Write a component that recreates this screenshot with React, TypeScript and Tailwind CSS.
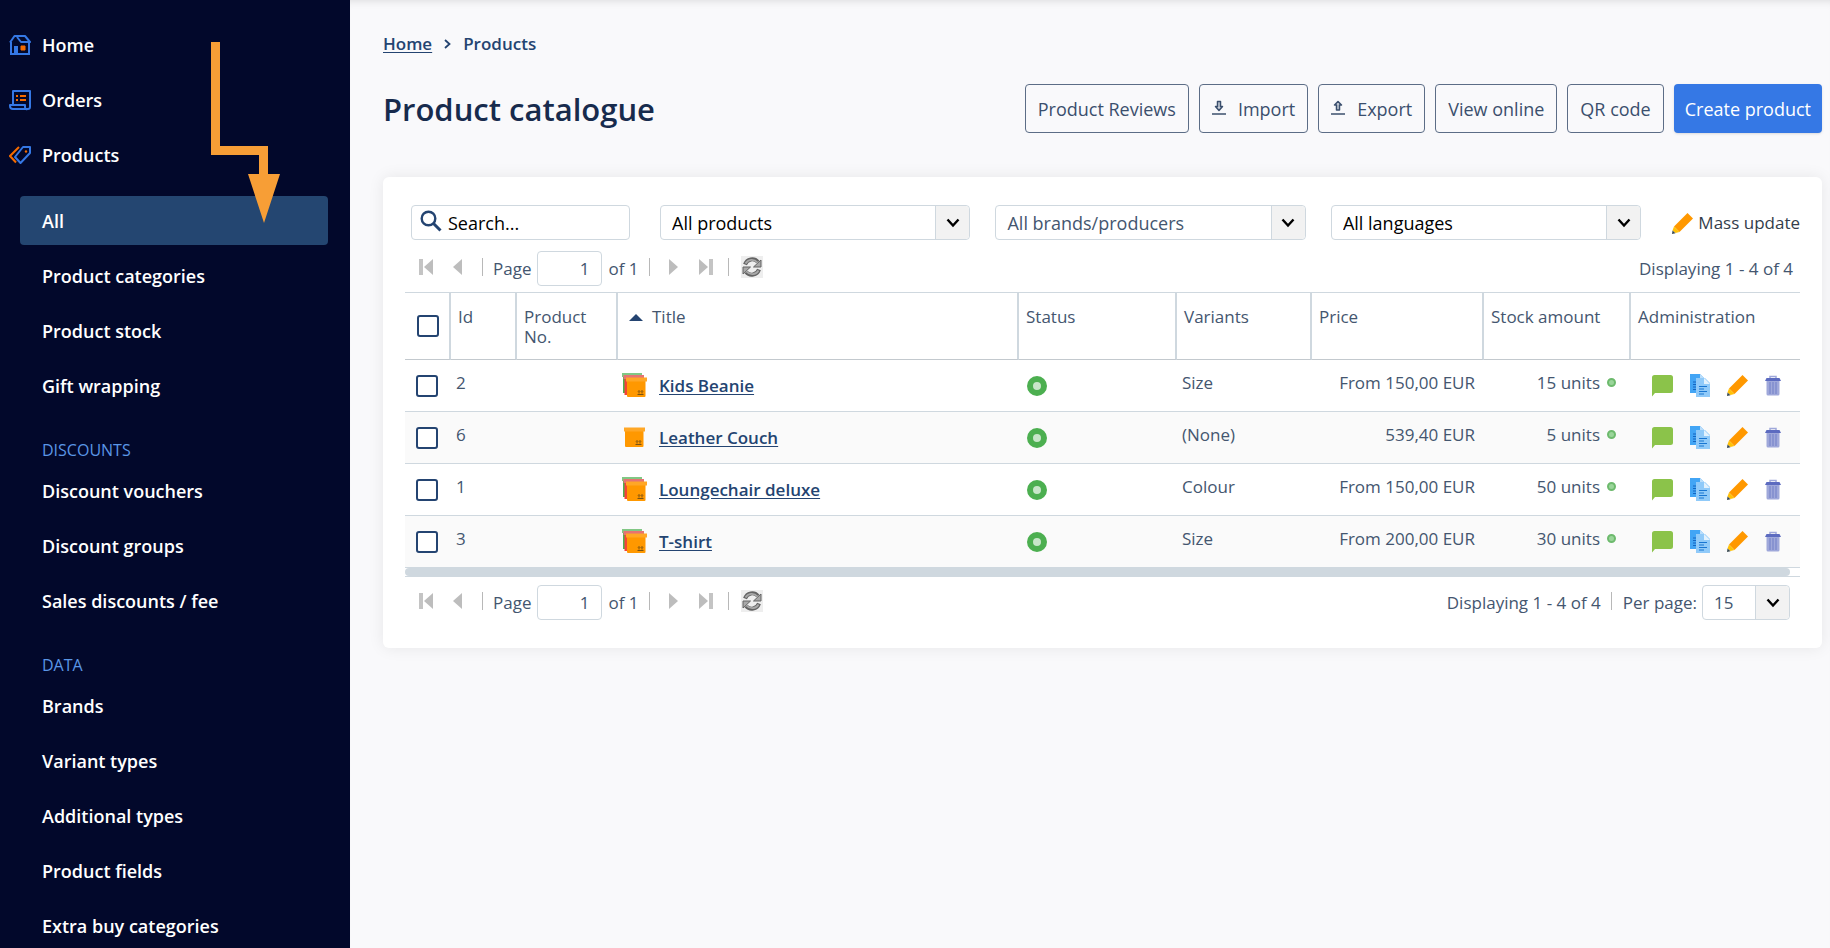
import type { ReactNode } from 'react';
import clsx from 'clsx';

type MenuItem = { label: string; active?: boolean };

const productMenu: MenuItem[] = [
  { label: 'All', active: true },
  { label: 'Product categories' },
  { label: 'Product stock' },
  { label: 'Gift wrapping' },
];

const discountMenu: MenuItem[] = [
  { label: 'Discount vouchers' },
  { label: 'Discount groups' },
  { label: 'Sales discounts / fee' },
];

const dataMenu: MenuItem[] = [
  { label: 'Brands' },
  { label: 'Variant types' },
  { label: 'Additional types' },
  { label: 'Product fields' },
  { label: 'Extra buy categories' },
];

const products = [
  { id: 2, title: 'Kids Beanie', variants: 'Size', price: 'From 150,00 EUR', stock: '15 units', stacked: true },
  { id: 6, title: 'Leather Couch', variants: '(None)', price: '539,40 EUR', stock: '5 units', stacked: false },
  { id: 1, title: 'Loungechair deluxe', variants: 'Colour', price: 'From 150,00 EUR', stock: '50 units', stacked: true },
  { id: 3, title: 'T-shirt', variants: 'Size', price: 'From 200,00 EUR', stock: '30 units', stacked: true },
];

/* ---------- icons ---------- */

function HomeIcon() {
  return (
    <svg width="22" height="20" viewBox="0 0 22 20" fill="none" stroke="#3578e5" strokeWidth="2">
      <path d="M2 7v12h18V7" />
      <path d="M1 7.500L5.500 1H16l5 6h-9L8 2" strokeLinejoin="round" />
      <path d="M5 11h4v8H5z" fill="#3578e5" stroke="none" />
      <path d="M12 11h4v4h-4z" fill="#f56b00" stroke="#f56b00" strokeWidth="1" />
    </svg>
  );
}

function OrdersIcon() {
  return (
    <svg width="23" height="22" viewBox="0 0 23 22" fill="none" stroke="#3578e5" strokeWidth="2">
      <path d="M4 15V2h17v16a2 2 0 0 1-2 2H4a3 3 0 0 1-3-3v-1h15v2a2 2 0 0 0 3 2" strokeLinejoin="round" />
      <path d="M7 7h2M7 11h2M11 7h6M11 11h6" stroke="#f56b00" />
    </svg>
  );
}

function ProductsIcon() {
  return (
    <svg width="23" height="18" viewBox="0 0 23 18" fill="none" stroke="#3578e5" strokeWidth="2">
      <path d="M10 1L1 10l6 6.500" stroke="#f56b00" />
      <path d="M14 1h7v6l-9.500 10L6 11z" strokeLinejoin="round" />
      <circle cx="17" cy="5.500" r="1.200" fill="#f56b00" stroke="none" />
    </svg>
  );
}

function TransferIcon({ up = false }: { up?: boolean }) {
  return (
    <svg width="14" height="15" viewBox="0 0 14 15" fill="#c9cfd9" stroke="#3b4f6d" strokeWidth="1.500" className="mb-[3px]">
      {up ? (
        <path d="M5.500 10V5H3.500L7 1.500 10.500 5h-2v5z" strokeLinejoin="round" />
      ) : (
        <path d="M5.500 1.500v5H3.500L7 10.500l3.500-4h-2v-5z" strokeLinejoin="round" />
      )}
      <path d="M0 14h14" />
    </svg>
  );
}

function SearchIcon() {
  return (
    <svg width="22" height="22" viewBox="0 0 22 22" fill="none" stroke="#244471" strokeWidth="2.400" className="mb-[3px] shrink-0">
      <circle cx="8.500" cy="8.500" r="6.800" />
      <path d="M13.500 13.500l7 7" strokeWidth="3" />
    </svg>
  );
}

function PencilIcon() {
  return (
    <svg width="23" height="23" viewBox="0 0 23 23">
      <path d="M16.500 1L22 6.500 8.500 20 3 14.500z" fill="#ff9800" />
      <path d="M3 14.500L8.500 20 4.500 21 1.500 18.500z" fill="#ffc107" />
      <path d="M1.500 18.500l3 2.700L1 22z" fill="#37474f" />
    </svg>
  );
}

function CommentIcon() {
  return (
    <svg width="23" height="23" viewBox="0 0 23 23">
      <path d="M3.500 1h16A2.500 2.500 0 0 1 22 3.500v13a2.500 2.500 0 0 1-2.500 2.500H4l-3 3.500v-19A2.500 2.500 0 0 1 3.500 1z" fill="#8bc34a" />
    </svg>
  );
}

function CopyIcon() {
  return (
    <svg width="20" height="23" viewBox="0 0 20 23">
      <path d="M0 0h10l4 4v15H0z" fill="#42a5f5" />
      <path d="M10 0l4 4h-4z" fill="#bbdefb" />
      <path d="M3 8h4M3 10.500h4M3 13h4M3 15.500h4" stroke="#1565c0" strokeWidth="1.200" />
      <path d="M6 4h9l5 5v14H6z" fill="#90caf9" />
      <path d="M14 4l6 6h-6z" fill="#e3f2fd" />
      <path d="M9 12.500h8M9 15h5M9 17.500h8M9 20h5" stroke="#1976d2" strokeWidth="1.200" />
    </svg>
  );
}

function TrashIcon() {
  return (
    <svg width="16" height="21" viewBox="0 0 16 21">
      <path d="M5 3V1.500h6V3" fill="none" stroke="#9fa8da" strokeWidth="1.500" />
      <path d="M1.500 6h13v13a1.500 1.500 0 0 1-1.500 1.500H3A1.500 1.500 0 0 1 1.500 19z" fill="#9fa8da" />
      <path d="M5 7v12M8 7v12M11 7v12" stroke="#7986cb" strokeWidth="1.200" />
      <path d="M1.500 3h13L16 6H0z" fill="#5c6bc0" />
    </svg>
  );
}

function BoxIcon({ stacked }: { stacked: boolean }) {
  return (
    <svg width="25" height="25" viewBox="0 0 25 25">
      {stacked && (
        <>
          <path d="M1 3h6v17H1z" fill="#4caf50" />
          <path d="M0 0h20v4H0z" fill="#81c784" />
          <path d="M2.500 5h6v17h-6z" fill="#f44336" />
          <path d="M1.500 2h20.500v4H1.500z" fill="#e57373" />
        </>
      )}
      <g transform={stacked ? undefined : 'translate(-2 -2)'}>
        <path d="M5 8h18.500v15a1 1 0 0 1-1 1H6a1 1 0 0 1-1-1z" fill="#ff9800" />
        <path d="M4 4.500h21v4H4z" fill="#ffa726" />
        <path d="M17 20.500V18M20 20.500V18M15.500 21.500h6M16 18.500l1-1 1 1M19 18.500l1-1 1 1" stroke="#6b4a12" strokeWidth="0.900" fill="none" />
      </g>
    </svg>
  );
}

function RefreshIcon() {
  return (
    <svg width="22" height="22" viewBox="0 0 22 22" fill="none">
      <path d="M4 8.500C6 3 13 1.500 17 6M18 13.500C16 19 9 20.500 5 16" stroke="#646464" strokeWidth="4" />
      <path d="M20 4v7h-7.500zM2 18v-7h7.500z" fill="#a8a8a8" stroke="#646464" strokeLinejoin="round" />
      <path d="M4.500 7.500C7 3 13 2.500 16.500 6.500M17.500 14.500C15 19 9 19.500 5.500 15.500" stroke="#a8a8a8" strokeWidth="1.800" />
    </svg>
  );
}

function StepIcon({ edge = false, back = false }: { edge?: boolean; back?: boolean }) {
  return (
    <svg width={edge ? 14 : 9} height="18" viewBox={edge ? '0 0 14 18' : '0 0 9 18'} className={clsx(back && '-scale-x-100')}>
      <path d="M0 1l9 8-9 8z" fill="#bdbdbd" />
      {edge && <path d="M10 1h4v16h-4z" fill="#c4c4c4" />}
    </svg>
  );
}

/* ---------- shared controls ---------- */

function SelectBox({ label, value, muted, className }: { label: string; value: string; muted?: boolean; className?: string }) {
  return (
    <div className={clsx('relative h-[35px]', className)}>
      <select
        aria-label={label}
        className={clsx(
          'h-full w-full appearance-none rounded border border-[#cfd8df] bg-white pl-[11px] pr-9',
          muted ? 'text-[#44566f]' : 'text-black',
        )}
      >
        <option>{value}</option>
      </select>
      <span className="pointer-events-none absolute inset-y-px right-px flex w-[34px] items-center justify-center rounded-r border-l border-[#cfd8df] bg-[#f2f2f2]">
        <svg width="14" height="10" viewBox="0 0 14 10" fill="none" stroke="#000" strokeWidth="2.400">
          <path d="M1.500 1.500L7 7.500l5.500-6" />
        </svg>
      </span>
    </div>
  );
}

function CheckBox({ label }: { label: string }) {
  return (
    <input
      type="checkbox"
      aria-label={label}
      className="block h-[22px] w-[22px] appearance-none rounded-[3px] border-2 border-[#244471] bg-white checked:bg-[#244471]"
    />
  );
}

function Separator() {
  return <span className="mb-1 h-[18px] w-px bg-[#b8b8b8]" />;
}

function Pager({ children }: { children: ReactNode }) {
  return (
    <div className="flex h-[35px] items-center pl-2">
      <button aria-label="First page" className="mb-1 ml-[6px]"><StepIcon edge back /></button>
      <button aria-label="Previous page" className="mb-1 ml-5 mr-5"><StepIcon back /></button>
      <Separator />
      <label className="ml-[10px] flex items-center gap-[6px]">
        <span className="pt-px">Page</span>
        <input
          type="text"
          defaultValue="1"
          className="h-[35px] w-[65px] rounded border border-[#cfd8df] bg-white pr-3 text-right"
        />
      </label>
      <span className="mr-[10px] ml-[6px] pt-px">of 1</span>
      <Separator />
      <button aria-label="Next page" className="mb-1 ml-[19px]"><StepIcon /></button>
      <button aria-label="Last page" className="mb-1 ml-[21px] mr-[15px]"><StepIcon edge /></button>
      <Separator />
      <button aria-label="Refresh" className="mb-1 ml-3 bg-[#eeeeee]"><RefreshIcon /></button>
      <div className="ml-auto flex items-center">{children}</div>
    </div>
  );
}

function ActionButton({ children }: { children: ReactNode }) {
  return (
    <button className="flex h-[49px] items-center gap-3 rounded border border-[#5c6d86] px-3 text-[#3b4f6d]">
      {children}
    </button>
  );
}

/* ---------- sidebar ---------- */

function TopLink({ icon, label }: { icon: ReactNode; label: string }) {
  return (
    <a href="#" className="flex h-[49px] items-center gap-[10px] pl-[9px]">
      <span className="w-[23px]">{icon}</span>
      {label}
    </a>
  );
}

function SubMenu({ items }: { items: MenuItem[] }) {
  return (
    <ul className="mr-[22px] ml-5 flex flex-col gap-[6px]">
      {items.map(item => (
        <li key={item.label}>
          <a href="#" className={clsx('flex h-[49px] items-center rounded pl-[22px]', item.active && 'bg-[#244671]')}>
            {item.label}
          </a>
        </li>
      ))}
    </ul>
  );
}

function MenuHeading({ children }: { children: ReactNode }) {
  return <h2 className="h-14 pt-7 pl-[42px] text-base leading-6 font-medium text-[#5a96e6]">{children}</h2>;
}

function Sidebar() {
  return (
    <aside className="relative w-[350px] shrink-0 overflow-hidden bg-[#02082b] pt-5 text-lg font-semibold text-white">
      <nav>
        <div className="mb-[17px] flex flex-col gap-[6px]">
          <TopLink icon={<HomeIcon />} label="Home" />
          <TopLink icon={<OrdersIcon />} label="Orders" />
          <TopLink icon={<ProductsIcon />} label="Products" />
        </div>
        <SubMenu items={productMenu} />
        <MenuHeading>DISCOUNTS</MenuHeading>
        <SubMenu items={discountMenu} />
        <MenuHeading>DATA</MenuHeading>
        <SubMenu items={dataMenu} />
      </nav>
      {/* pointer to the active entry */}
      <svg className="pointer-events-none absolute top-[42px] left-[211px]" width="70" height="181" viewBox="0 0 70 181">
        <path d="M0 0h9v104h48v28h12L53 181 37 132h11v-19H0z" fill="#f79e36" />
      </svg>
    </aside>
  );
}

/* ---------- table ---------- */

const headCell = 'border-r-2 border-[#cfd8df] pt-[14px] pr-1 pl-[7px] text-left align-top font-normal leading-5';

function ProductTable() {
  return (
    <table className="w-full table-fixed border-separate border-spacing-0">
      <colgroup>
        <col className="w-[46px]" />
        <col className="w-[66px]" />
        <col className="w-[101px]" />
        <col />
        <col className="w-[158px]" />
        <col className="w-[135px]" />
        <col className="w-[172px]" />
        <col className="w-[147px]" />
        <col className="w-[169px]" />
      </colgroup>
      <thead>
        <tr className="h-[68px] [&>th]:border-t [&>th]:border-b [&>th]:border-b-[#c3c9ce]">
          <th className="border-r-2 border-[#cfd8df] pl-3 align-middle"><CheckBox label="Select all" /></th>
          <th className={headCell}>Id</th>
          <th className={headCell}>Product No.</th>
          <th className={headCell}>
            <button className="flex items-center gap-[9px] pl-1">
              <svg width="14" height="7" viewBox="0 0 14 7"><path d="M7 0l7 7H0z" fill="#244471" /></svg>
              Title
            </button>
          </th>
          <th className={headCell}>Status</th>
          <th className={headCell}>Variants</th>
          <th className={headCell}>Price</th>
          <th className={headCell}>Stock amount</th>
          <th className="border-[#cfd8df] pt-[14px] pl-[7px] text-left align-top leading-5 font-normal">Administration</th>
        </tr>
      </thead>
      <tbody>
        {products.map(p => (
          <tr key={p.id} className="h-[52px] even:bg-[#fafafa] [&>td]:border-b [&>td]:border-[#cfd8df] [&>td]:p-0">
            <td><div className="pl-[11px]"><CheckBox label={`Select ${p.title}`} /></div></td>
            <td><div className="pb-[6px] pl-[5px]">{p.id}</div></td>
            <td />
            <td>
              <div className="flex items-center gap-3 pl-1">
                <BoxIcon stacked={p.stacked} />
                <a href="#" className="font-semibold text-[#244471] underline underline-offset-2">{p.title}</a>
              </div>
            </td>
            <td>
              <div className="pl-2">
                <span className="block h-5 w-5 rounded-full border-[6px] border-[#4caf50] bg-[#c8e6c9]" />
              </div>
            </td>
            <td><div className="pb-[6px] pl-[5px]">{p.variants}</div></td>
            <td><div className="pr-[9px] pb-[6px] text-right">{p.price}</div></td>
            <td>
              <div className="flex items-center justify-end gap-[7px] pr-[15px] pb-[6px]">
                {p.stock}
                <span className="h-[9px] w-[9px] rounded-full border-2 border-[#6dba6d] bg-[#9ad59a]" />
              </div>
            </td>
            <td>
              <div className="flex items-center gap-4 pl-5">
                <button aria-label="Comment"><CommentIcon /></button>
                <button aria-label="Copy"><CopyIcon /></button>
                <button aria-label="Edit"><PencilIcon /></button>
                <button aria-label="Delete"><TrashIcon /></button>
              </div>
            </td>
          </tr>
        ))}
      </tbody>
    </table>
  );
}

export default function App() {
  return (
    <div className="flex h-screen overflow-hidden bg-[#f9f9fb] font-['Open_Sans',sans-serif] text-[17px] leading-6 text-[#44566f]">
      <Sidebar />

      <main className="min-w-0 flex-1 pr-2 pl-[33px] shadow-[inset_0_8px_10px_-8px_rgba(0,0,0,0.15)]">
        <nav aria-label="Breadcrumb" className="flex items-center gap-3 pt-8 font-semibold text-[#244471]">
          <a href="#" className="underline underline-offset-2">Home</a>
          <svg width="7" height="10" viewBox="0 0 7 10" fill="none" stroke="#244471" strokeWidth="1.800"><path d="M1 1l4.500 4L1 9" /></svg>
          <span>Products</span>
        </nav>

        <header className="mt-7 flex items-center justify-between">
          <h1 className="pt-[2px] text-[31px] leading-[47px] font-semibold text-[#172b4d]">Product catalogue</h1>
          <div className="flex gap-[10px] text-lg">
            <ActionButton>Product Reviews</ActionButton>
            <ActionButton><TransferIcon />Import</ActionButton>
            <ActionButton><TransferIcon up />Export</ActionButton>
            <ActionButton>View online</ActionButton>
            <ActionButton>QR code</ActionButton>
            <button className="h-[49px] rounded bg-[#3578e5] px-[11px] text-white shadow">Create product</button>
          </div>
        </header>

        <section className="mt-11 rounded-md bg-white px-[22px] pt-7 pb-7 shadow-[0_0_16px_rgba(0,0,0,0.08)]">
          <div className="mb-[11px] flex items-center pl-[6px] text-lg">
            <label className="mr-[30px] flex h-[35px] w-[219px] items-center gap-[6px] rounded border border-[#cfd8df] pl-2">
              <SearchIcon />
              <input type="text" aria-label="Search" placeholder="Search..." className="w-full min-w-0 outline-none placeholder:text-black" />
            </label>
            <div className="flex flex-1 gap-[25px]">
              <SelectBox label="Products" value="All products" className="flex-1" />
              <SelectBox label="Brands" value="All brands/producers" muted className="flex-1" />
              <SelectBox label="Languages" value="All languages" className="flex-1" />
            </div>
            <button className="ml-[30px] flex items-center gap-1 pt-px text-[17px] text-[#333d4b]"><PencilIcon />Mass update</button>
          </div>

          <div className="mb-[6px]">
            <Pager><span className="pt-px pr-[7px]">Displaying 1 - 4 of 4</span></Pager>
          </div>

          <ProductTable />
          <div className="mb-2 border-b border-[#cfd8df]">
            <div className="mr-[10px] h-2 rounded-full bg-[#cfd8df]" />
          </div>

          <Pager>
            <span className="mr-[10px] pt-px">Displaying 1 - 4 of 4</span>
            <Separator />
            <span className="mr-[5px] ml-[11px] pt-px">Per page:</span>
            <SelectBox label="Per page" value="15" muted className="mr-[10px] w-[88px]" />
          </Pager>
        </section>
      </main>
    </div>
  );
}
